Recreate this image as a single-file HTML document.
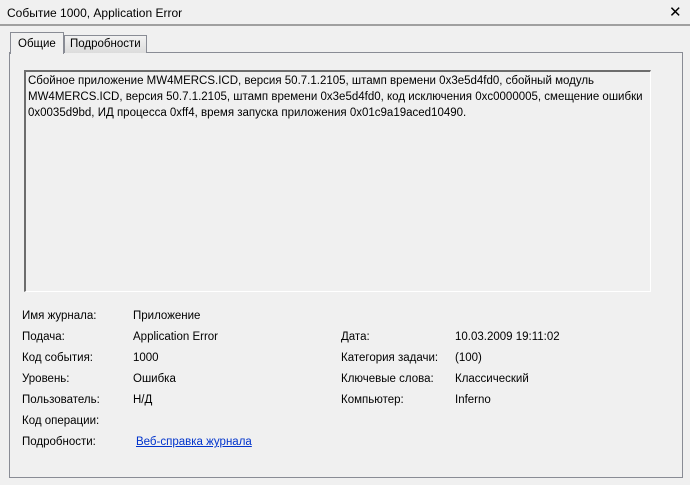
<!DOCTYPE html>
<html><head><meta charset="utf-8"><style>
body{margin:0;width:690px;height:485px;background:#f0f0f0;font-family:"Liberation Sans","DejaVu Sans",sans-serif;font-size:11.5px;color:#000;position:relative;overflow:hidden}
.a{position:absolute;white-space:nowrap}
#title{left:7px;top:6px;font-size:12px}
#tb{left:0;top:24px;width:690px;height:2px;background:#a0a0a0}
#x{left:669px;top:3px;font-size:15px;font-weight:bold}
#panel{left:9px;top:52px;width:672px;height:424px;border:1px solid #898c95;background:#f0f0f0}
.tab{position:absolute;border:1px solid #898c95;border-bottom:none;padding:0 5px}
#t1{left:10px;top:32px;height:21px;line-height:22px;background:#f0f0f0;padding:0 7px;z-index:2}
#t2{left:64px;top:35px;height:17px;line-height:17px;background:linear-gradient(#f2f2f2,#dcdcdc)}
#box{left:24px;top:70px;width:624px;height:219px;border:1px solid #fff;border-top:2px solid #6d6d6d;border-left:2px solid #6d6d6d;background:#f0f0f0}
#msg{left:28px;top:73px;line-height:16px;white-space:normal;width:622px}
a{color:#0033cc;text-decoration:underline}
</style></head><body>
<div class="a" id="title">Событие 1000, Application Error</div>
<div class="a" id="x">✕</div>
<div class="a" id="tb"></div>
<div class="a" id="panel"></div>
<div class="tab" id="t1">Общие</div>
<div class="tab" id="t2">Подробности</div>
<div class="a" id="box"></div>
<div class="a" id="msg">Сбойное приложение MW4MERCS.ICD, версия 50.7.1.2105, штамп времени 0x3e5d4fd0, сбойный модуль<br>MW4MERCS.ICD, версия 50.7.1.2105, штамп времени 0x3e5d4fd0, код исключения 0xc0000005, смещение ошибки<br>0x0035d9bd, ИД процесса 0xff4, время запуска приложения 0x01c9a19aced10490.</div>
<div class="a" style="left:22px;top:310px">Имя журнала:</div><div class="a" style="left:133px;top:310px">Приложение</div>
<div class="a" style="left:22px;top:331px">Подача:</div><div class="a" style="left:133px;top:331px">Application Error</div>
<div class="a" style="left:22px;top:352px">Код события:</div><div class="a" style="left:133px;top:352px">1000</div>
<div class="a" style="left:22px;top:373px">Уровень:</div><div class="a" style="left:133px;top:373px">Ошибка</div>
<div class="a" style="left:22px;top:394px">Пользователь:</div><div class="a" style="left:133px;top:394px">Н/Д</div>
<div class="a" style="left:22px;top:415px">Код операции:</div>
<div class="a" style="left:22px;top:436px">Подробности:</div><div class="a" style="left:136px;top:436px"><a>Веб-справка журнала</a></div>
<div class="a" style="left:341px;top:331px">Дата:</div><div class="a" style="left:455px;top:331px">10.03.2009 19:11:02</div>
<div class="a" style="left:341px;top:352px">Категория задачи:</div><div class="a" style="left:455px;top:352px">(100)</div>
<div class="a" style="left:341px;top:373px">Ключевые слова:</div><div class="a" style="left:455px;top:373px">Классический</div>
<div class="a" style="left:341px;top:394px">Компьютер:</div><div class="a" style="left:455px;top:394px">Inferno</div>
</body></html>
